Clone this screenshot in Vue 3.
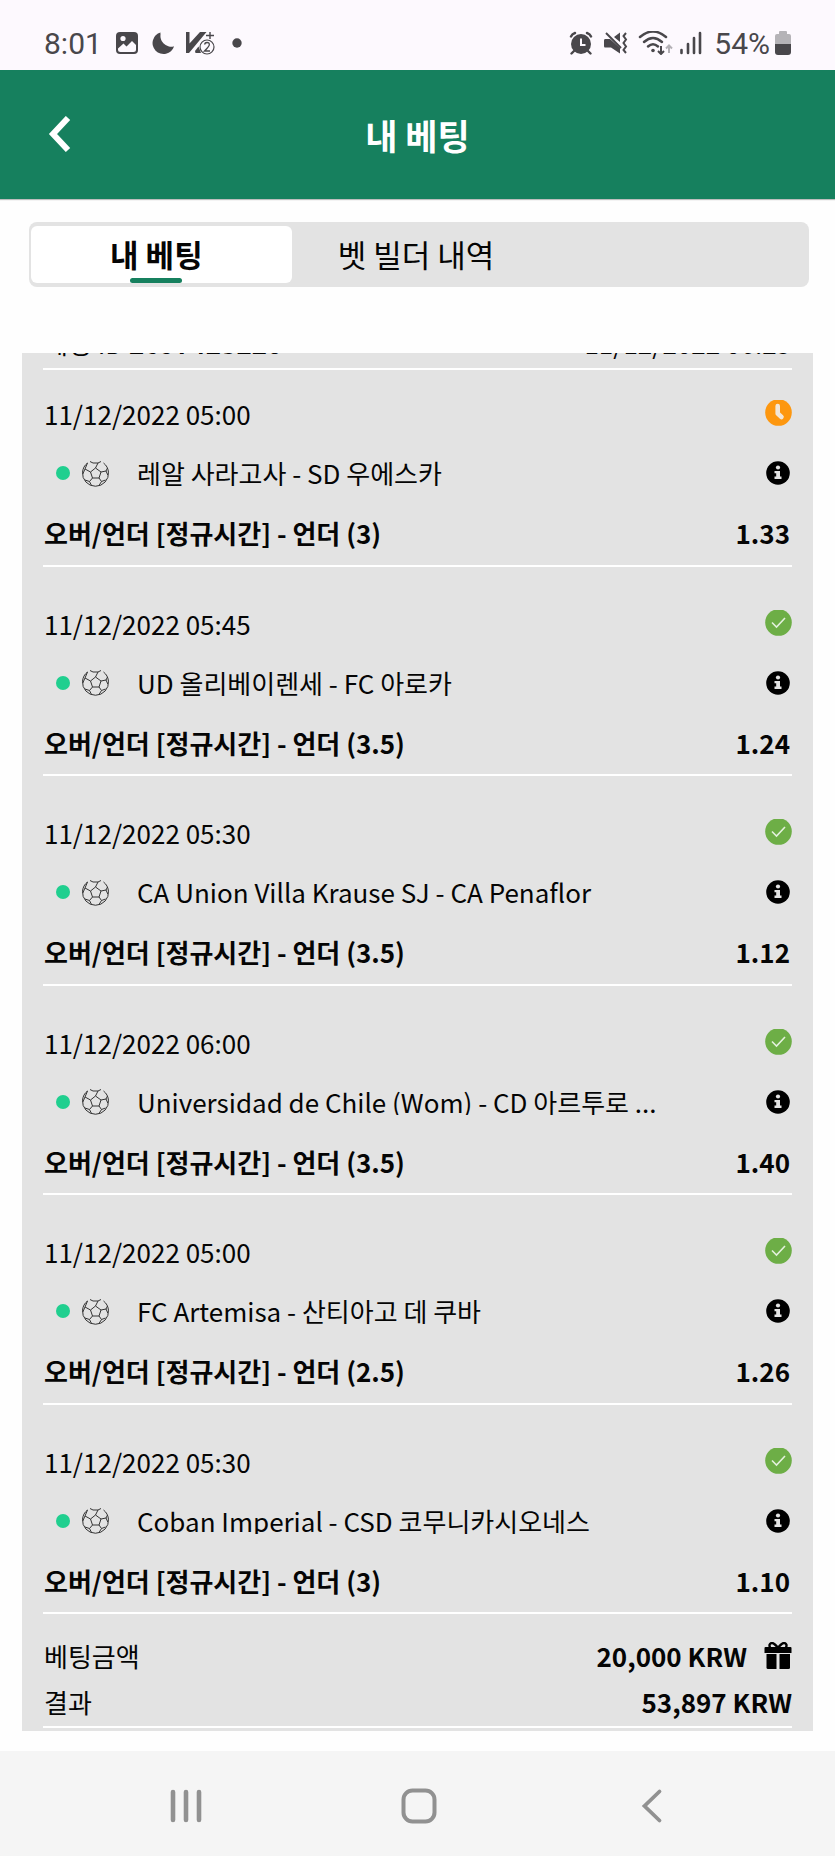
<!-- MyBets.vue -->
<template>
  <div class="screen">
    <!-- Phone Status Bar -->
    <div class="status-bar">
      <div class="status-left">
        <span class="clock">8:01</span>
        <svg width="30" height="24" viewBox="0 0 30 24">
          <rect x="4" y="1" width="22" height="22" rx="4" fill="#49474b" />
          <circle cx="11" cy="7.500" r="2.600" fill="#fdf9fe" />
          <path
            d="M6 17.500 L11.500 12.500 L14.500 15.500 L20 10 L24 14 V18.500 Q24 21 21.500 21 H8.500 Q6 21 6 18.500 Z"
            fill="#fdf9fe"
          />
        </svg>
        <svg width="30" height="24" viewBox="0 0 30 24">
          <path
            d="M11.500 1.500 A11 11 0 1 0 25 15.500 A11.500 11.500 0 0 1 11.500 1.500 Z"
            fill="#49474b"
          />
          <path d="M11.500 1.500 Q10 13 16 15.500 Q20 17.500 25 15.500 L18 20 L8 14 Z" fill="#49474b" />
        </svg>
        <svg width="30" height="24" viewBox="0 0 30 24">
          <path d="M0 1 H3.500 V12.500 L14 1 H20.500 L3 22 H0 Z" fill="#49474b" />
          <path d="M9 20 L12.500 15.500 L15 22 H9.500 Z" fill="#49474b" />
          <path d="M20 4.500 H28 M24 1 V8" stroke="#49474b" stroke-width="1.400" />
          <circle cx="21" cy="16" r="7" fill="#fdf9fe" stroke="#49474b" stroke-width="1.200" />
          <path
            d="M18.500 13.500 Q19 11.500 21 11.500 Q23.500 11.500 23.300 13.800 Q23 15.500 18.500 20 H24"
            fill="none"
            stroke="#49474b"
            stroke-width="1.300"
          />
        </svg>
        <svg width="30" height="24" viewBox="0 0 30 24">
          <circle cx="14" cy="12" r="4.700" fill="#49474b" />
        </svg>
      </div>
      <div class="status-right">
        <svg width="30" height="24" viewBox="0 0 30 24">
          <circle cx="15" cy="13" r="10" fill="#49474b" />
          <path
            d="M5 5.500 Q6 3 9 2 M25 5.500 Q24 3 21 2 M8 20 L5.500 22.500 M22 20 L24.500 22.500"
            fill="none"
            stroke="#49474b"
            stroke-width="2.400"
            stroke-linecap="round"
          />
          <path d="M15 7.500 V14 H19.500" fill="none" stroke="#fdf9fe" stroke-width="2" />
        </svg>
        <svg width="30" height="24" viewBox="0 0 30 24">
          <path d="M3 8 H8 L18 17 V22.500 L9 16.500 H3 Q2 16.500 2 15 V9.500 Q2 8 3 8 Z" fill="#49474b" />
          <path d="M12 6 L18 1.500 V11 Z" fill="#49474b" />
          <path d="M4 2 L19 17" stroke="#49474b" stroke-width="2" />
          <path
            d="M24 2 L21.500 5 L24 8.500 L21.500 12 L24 15.500 L21.500 19 L24 22"
            fill="none"
            stroke="#49474b"
            stroke-width="2"
          />
        </svg>
        <svg width="36" height="24" viewBox="0 0 36 24">
          <g fill="none" stroke="#49474b" stroke-width="2.500" stroke-linecap="round">
            <path d="M2 6 Q15 -5 28 6" />
            <path d="M6 11 Q15 3 24 11" />
            <path d="M10 15.500 Q15 11 20 15.500" />
          </g>
          <circle cx="15" cy="19.500" r="1.800" fill="#49474b" />
          <path d="M23 15 V23 M20 20 L23 23 L26 20" fill="none" stroke="#49474b" stroke-width="2" />
          <path d="M31 22 V14.500 M28 17.500 L31 14.500 L34 17.500" fill="none" stroke="#b3b0b5" stroke-width="2" />
        </svg>
        <svg width="28" height="24" viewBox="0 0 28 24">
          <path
            d="M1.500 19 V22 M8 13 V22 M14 7 V22 M20 2 V22"
            stroke="#49474b"
            stroke-width="2.600"
            stroke-linecap="round"
          />
        </svg>
        <span class="battery">
          54%
          <svg width="18" height="24" viewBox="0 0 18 24">
            <path
              d="M5 3 V1 Q5 0 6 0 H12 Q13 0 13 1 V3 H15 Q17 3 17 5 V14 H1 V5 Q1 3 3 3 Z"
              fill="#b5b3b7"
            />
            <path d="M1 13 H17 V21 Q17 24 14 24 H4 Q1 24 1 21 Z" fill="#49474b" />
          </svg>
        </span>
      </div>
    </div>

    <!-- App Header -->
    <header class="app-header">
      <button type="button" class="back-btn" aria-label="뒤로">
        <svg width="24" height="36" viewBox="0 0 24 36">
          <path d="M20 2 L5 18 L20 34" fill="none" stroke="#fff" stroke-width="6" />
        </svg>
      </button>
      <h1 class="title">내 베팅</h1>
    </header>

    <!-- Tabs -->
    <div class="tabs" role="tablist">
      <button
        v-for="tab in tabs"
        :key="tab"
        type="button"
        role="tab"
        class="tab"
        :class="{ active: tab === activeTab }"
        :aria-selected="tab === activeTab"
        @click="activeTab = tab"
      >
        {{ tab }}
      </button>
    </div>

    <!-- Bet Slip -->
    <main class="slip">
      <div class="slip-head">
        <span>베팅 ID <b>2697423220</b></span>
        <span>11/12/2022 06:25</span>
      </div>

      <section v-for="(event, index) in events" :key="index" class="event">
        <div class="event-top">
          <span>{{ event.date }}</span>
          <svg v-if="event.pending" class="result" width="27" height="26" viewBox="0 0 27 26">
            <circle cx="13.500" cy="12.500" r="13.300" fill="#fd970f" />
            <path
              d="M12.700 6 V13.500 L16.500 17"
              fill="none"
              stroke="#f1e6d8"
              stroke-width="4.600"
              stroke-linecap="round"
              stroke-linejoin="round"
            />
          </svg>
          <svg v-else class="result" width="27" height="26" viewBox="0 0 27 26">
            <circle cx="13.500" cy="12.500" r="13.300" fill="#6dae46" />
            <path d="M7 12.500 L11.500 17 L20 8" fill="none" stroke="#e3f0dc" stroke-width="1.600" />
          </svg>
        </div>
        <div class="event-match">
          <i class="live-dot"></i>
          <svg width="27" height="27" viewBox="0 0 27 27">
            <g fill="none" stroke="#333" stroke-width="1">
              <path d="M5.500 3 A13 13 0 1 0 21.500 3" />
              <path d="M8 1.500 L11 3 H16 L19 1.500" />
              <path d="M13.500 8 L19 12 L17 18 H10.500 L8.500 12 Z" />
              <path d="M13.500 8 L16 3 M19 12 L24 11 M17 18 L19.500 21.500 M10.500 18 L7.500 21.500 M8.500 12 L3 9" />
              <path d="M3 9 L5.500 3 M3 9 L0.800 14 M24 11 L25.500 8 M24 11 L25.800 15" />
              <path d="M7.500 21.500 L3 20 M7.500 21.500 L9.500 25.500 M19.500 21.500 L23.500 20 M19.500 21.500 L17 25.500" />
            </g>
          </svg>
          <span class="teams">{{ event.teams }}</span>
          <button type="button" class="info-btn" aria-label="정보">
            <svg width="24" height="24" viewBox="0 0 24 24">
              <circle cx="12" cy="12" r="11.800" fill="#000" />
              <circle cx="12" cy="6.500" r="2.100" fill="#e3e3e3" />
              <path d="M8.500 10 H14 V15.500 H15.500 V18 H8.500 V15.500 H10.200 V12.300 H8.500 Z" fill="#e3e3e3" />
            </svg>
          </button>
        </div>
        <div class="event-pick">
          <span>{{ event.pick }}</span>
          <span>{{ event.odds }}</span>
        </div>
      </section>

      <!-- Totals -->
      <dl class="totals">
        <div class="total">
          <dt>베팅금액</dt>
          <dd>
            20,000 KRW
            <svg width="28" height="28" viewBox="0 0 28 28">
              <path d="M1.500 5 H26.500 Q27.500 5 27.500 6 V11 H0.500 V6 Q0.500 5 1.500 5 Z" />
              <path
                d="M14 6 Q10 0.500 7.500 1 Q4.500 2 6 5.500 M14 6 Q18 0.500 20.500 1 Q23.500 2 22 5.500"
                fill="none"
                stroke="#000"
                stroke-width="2.400"
              />
              <path d="M2.500 12 H12.500 V27 H4 Q2.500 27 2.500 25.500 Z" />
              <path d="M15.500 12 H26 V25.500 Q26 27 24.500 27 H15.500 Z" />
            </svg>
          </dd>
        </div>
        <div class="total">
          <dt>결과</dt>
          <dd>53,897 KRW</dd>
        </div>
      </dl>
    </main>

    <!-- Phone Navigation -->
    <nav class="phone-nav">
      <button type="button" aria-label="최근 앱">
        <svg width="36" height="36" viewBox="0 0 36 36">
          <path d="M5 4 V32 M18 4 V32 M31 4 V32" stroke="#919191" stroke-width="4.600" stroke-linecap="round" />
        </svg>
      </button>
      <button type="button" aria-label="홈">
        <svg width="36" height="36" viewBox="0 0 36 36">
          <rect x="2.500" y="2.500" width="31" height="31" rx="9" fill="none" stroke="#919191" stroke-width="4" />
        </svg>
      </button>
      <button type="button" aria-label="뒤로 가기">
        <svg width="36" height="36" viewBox="0 0 36 36">
          <path d="M25.500 3.500 L10.500 18 L25.500 32.500" fill="none" stroke="#919191" stroke-width="3.800" stroke-linecap="round" />
        </svg>
      </button>
    </nav>
  </div>
</template>

<script setup>
import { ref } from "vue";

const tabs = ["내 베팅", "벳 빌더 내역"];
const activeTab = ref(tabs[0]);

const events = [
  {
    date: "11/12/2022 05:00",
    teams: "레알 사라고사 - SD 우에스카",
    pick: "오버/언더 [정규시간] - 언더 (3)",
    odds: "1.33",
    pending: true,
  },
  {
    date: "11/12/2022 05:45",
    teams: "UD 올리베이렌세 - FC 아로카",
    pick: "오버/언더 [정규시간] - 언더 (3.5)",
    odds: "1.24",
  },
  {
    date: "11/12/2022 05:30",
    teams: "CA Union Villa Krause SJ - CA Penaflor",
    pick: "오버/언더 [정규시간] - 언더 (3.5)",
    odds: "1.12",
  },
  {
    date: "11/12/2022 06:00",
    teams: "Universidad de Chile (Wom) - CD 아르투로 ...",
    pick: "오버/언더 [정규시간] - 언더 (3.5)",
    odds: "1.40",
  },
  {
    date: "11/12/2022 05:00",
    teams: "FC Artemisa - 산티아고 데 쿠바",
    pick: "오버/언더 [정규시간] - 언더 (2.5)",
    odds: "1.26",
  },
  {
    date: "11/12/2022 05:30",
    teams: "Coban Imperial - CSD 코무니카시오네스",
    pick: "오버/언더 [정규시간] - 언더 (3)",
    odds: "1.10",
  },
];
</script>

<style>
body {
  margin: 0;
  background: #fefefe;
}
</style>

<style scoped>
.screen {
  display: flex;
  flex-direction: column;
  min-height: 100vh;
  font-family: "Noto Sans CJK KR", sans-serif;
  font-size: 26px;
  color: #050505;
}

svg {
  display: block;
  flex: none;
}

button {
  padding: 0;
  border: none;
  background: none;
  font: inherit;
  color: inherit;
  cursor: pointer;
}

/* Status Bar */
.status-bar {
  display: flex;
  justify-content: space-between;
  align-items: center;
  height: 54px;
  padding: 16px 43px 0 44px;
  background: #fdf9fe;
  font-family: Roboto, sans-serif;
  font-size: 30px;
  color: #49474b;
}

.status-left {
  display: flex;
  align-items: center;
  gap: 7px;
}

.clock {
  padding-right: 3px;
}

.status-right {
  display: flex;
  align-items: center;
  gap: 6px;
}

.battery {
  display: flex;
  align-items: center;
  gap: 4px;
}

/* Header */
.app-header {
  display: grid;
  grid-template-columns: 48px 1fr 48px;
  align-items: center;
  height: 129px;
  padding: 0 36px;
  background: #16805e;
  box-shadow: 0 1px 1px rgba(0, 0, 0, 0.25);
  color: #fff;
}

.back-btn {
  display: flex;
  justify-content: center;
  padding: 6px 0 8px;
}

.title {
  margin: 0;
  font-size: 35px;
  font-weight: 700;
  text-align: center;
}

/* Tabs */
.tabs {
  display: flex;
  margin: 23px 26px 0 29px;
  padding: 4px 2px;
  border-radius: 8px;
  background: #e3e3e3;
}

.tab {
  position: relative;
  height: 57px;
  padding: 0 46px 2px;
  font-size: 31px;
}

.tab.active {
  flex: 0 0 33.6%;
  padding: 0 10px 2px 0;
  border-radius: 6px;
  background: #fff;
  font-weight: 700;
}

.tab.active::after {
  content: "";
  position: absolute;
  bottom: 0;
  left: calc(50% - 31px);
  width: 52px;
  height: 5px;
  border-radius: 3px;
  background: #16805e;
}

/* Slip */
.slip {
  display: flex;
  flex: 1 0 auto;
  flex-direction: column;
  margin: 66px 22px 20px;
  padding: 0 21px 3px;
  background: #e3e3e3;
  overflow: hidden;
}

.slip-head {
  display: flex;
  justify-content: space-between;
  margin-top: -29px;
  padding: 0 1px 6px;
  border-bottom: 2px solid #fff;
  line-height: 38px;
}

.event {
  flex: 1 0 auto;
  padding-top: 38px;
  border-bottom: 2px solid #fff;
}

.slip-head + .event {
  padding-top: 25px;
}

.event-top {
  display: flex;
  justify-content: space-between;
  padding-left: 1px;
  line-height: 38px;
}

.result {
  margin-top: 5px;
}

.event-match {
  display: flex;
  align-items: center;
  height: 42px;
  margin: 19px 0 18px;
  padding: 0 2px 0 13px;
}

.live-dot {
  width: 14px;
  height: 14px;
  margin-right: 12px;
  border-radius: 50%;
  background: #20cf8f;
}

.teams {
  flex: 1;
  margin-left: 28px;
  line-height: 26px;
  white-space: nowrap;
  overflow: hidden;
  text-overflow: ellipsis;
}

.event-pick {
  display: flex;
  justify-content: space-between;
  padding: 0 2px 10px 1px;
  line-height: 42px;
  font-weight: 700;
}

/* Totals */
.totals {
  margin: 0;
  padding: 19px 0 1px;
  border-bottom: 2px solid #fff;
}

.total {
  display: flex;
  justify-content: space-between;
  padding-left: 1px;
  line-height: 46px;
}

.total dd {
  display: flex;
  align-items: center;
  gap: 17px;
  margin: 0;
  font-weight: 700;
}

/* Phone Navigation */
.phone-nav {
  display: flex;
  align-items: center;
  height: 100px;
  padding: 5px 67px 0 69px;
  background: #f5f5f5;
}

.phone-nav button {
  display: flex;
  flex: 1;
  justify-content: center;
}
</style>
